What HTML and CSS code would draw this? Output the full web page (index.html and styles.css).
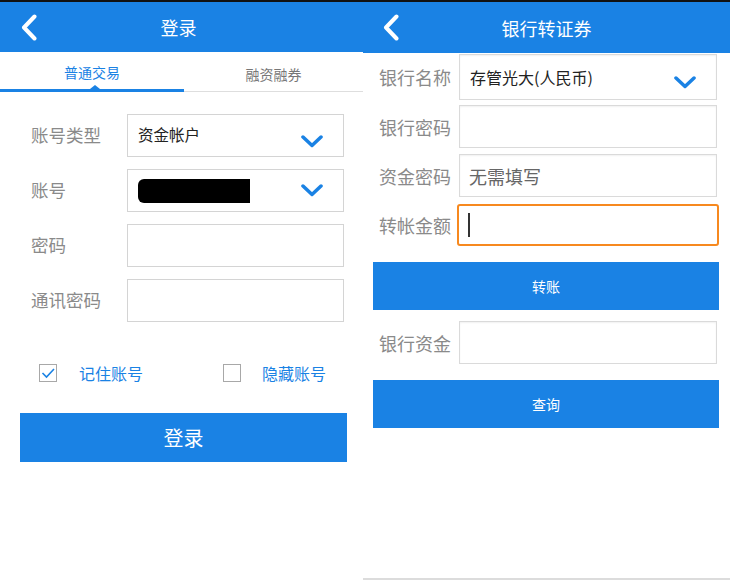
FILE: index.html
```html
<!DOCTYPE html>
<html lang="zh-CN">
<head>
<meta charset="utf-8">
<title>登录 / 银行转证券</title>
<link rel="stylesheet" href="styles.css">
</head>
<body>
<div class="page">
  <section class="panel panel-left">
    <header class="header header-left">
      <svg class="back" width="16" height="27" viewBox="0 0 16 27"><path d="M13.5 2.5 L3 13.5 L13.5 24.5" fill="none" stroke="#fff" stroke-width="4" stroke-linecap="round" stroke-linejoin="round"/></svg>
      <span class="title title-left">登录</span>
    </header>
    <nav class="tabs">
      <div class="tab tab-active">普通交易<span class="tri"></span></div>
      <div class="tab">融资融券</div>
    </nav>
    <div class="form-left">
      <div class="lrow">
        <span class="llabel">账号类型</span>
        <div class="lbox lbox-select lbox-bottom"><span class="lvalue">资金帐户</span>
          <svg class="chev" width="22" height="13" viewBox="0 0 22 13"><path d="M2 2 L11 10.5 L20 2" fill="none" stroke="#1a82e4" stroke-width="3.5" stroke-linecap="round" stroke-linejoin="round"/></svg>
        </div>
      </div>
      <div class="lrow">
        <span class="llabel">账号</span>
        <div class="lbox lbox-select"><span class="redact"></span>
          <svg class="chev" width="22" height="13" viewBox="0 0 22 13"><path d="M2 2 L11 10.5 L20 2" fill="none" stroke="#1a82e4" stroke-width="3.5" stroke-linecap="round" stroke-linejoin="round"/></svg>
        </div>
      </div>
      <div class="lrow">
        <span class="llabel">密码</span>
        <div class="lbox"></div>
      </div>
      <div class="lrow">
        <span class="llabel">通讯密码</span>
        <div class="lbox"></div>
      </div>
    </div>
    <div class="checks">
      <div class="check check-first">
        <span class="cbox"><svg width="16" height="16" viewBox="0 0 16 16"><path d="M2.5 8 L6.5 12 L14 4" fill="none" stroke="#1a82e4" stroke-width="1.6"/></svg></span>
        <span class="ctext">记住账号</span>
      </div>
      <div class="check check-second">
        <span class="cbox"></span>
        <span class="ctext">隐藏账号</span>
      </div>
    </div>
    <div class="btn btn-login">登录</div>
  </section>

  <section class="panel panel-right">
    <header class="header header-right">
      <svg class="back" width="16" height="27" viewBox="0 0 16 27"><path d="M13.5 2.5 L3 13.5 L13.5 24.5" fill="none" stroke="#fff" stroke-width="4" stroke-linecap="round" stroke-linejoin="round"/></svg>
      <span class="title">银行转证券</span>
    </header>
    <div class="rrow r1">
      <span class="rlabel">银行名称</span>
      <div class="rbox rbox-select"><span class="rvalue">存管光大(人民币)</span>
        <svg class="chev" width="22" height="13" viewBox="0 0 22 13"><path d="M2 2 L11 10.5 L20 2" fill="none" stroke="#1a82e4" stroke-width="3.5" stroke-linecap="round" stroke-linejoin="round"/></svg>
      </div>
    </div>
    <div class="rrow r2">
      <span class="rlabel">银行密码</span>
      <div class="rbox"></div>
    </div>
    <div class="rrow r3">
      <span class="rlabel">资金密码</span>
      <div class="rbox"><span class="placeholder">无需填写</span></div>
    </div>
    <div class="rrow r4">
      <span class="rlabel">转帐金额</span>
      <div class="rbox rbox-focus"><span class="cursor"></span></div>
    </div>
    <div class="btn btn-r btn-transfer">转账</div>
    <div class="rrow r5">
      <span class="rlabel">银行资金</span>
      <div class="rbox"></div>
    </div>
    <div class="btn btn-r btn-query">查询</div>
  </section>
</div>
</body>
</html>
```

FILE: styles.css
```css
html, body {
  margin: 0;
  padding: 0;
  background: #fff;
}
body {
  font-family: "Noto Sans CJK SC", "Noto Sans", sans-serif;
  width: 730px;
  height: 580px;
  overflow: hidden;
}
.page {
  display: flex;
  width: 730px;
  height: 580px;
}
.panel {
  display: flex;
  flex-direction: column;
  height: 580px;
  box-sizing: border-box;
}
.panel-left {
  width: 363px;
}
.panel-right {
  width: 367px;
  border-bottom: 2px solid #dcdcdc;
}
.header {
  background: #1a82e4;
  border-top: 2px solid #111;
  display: flex;
  align-items: center;
  justify-content: center;
  position: relative;
  color: #fff;
}
.header-left { height: 50px; }
.header-right { height: 51px; }
.title {
  font-size: 18px;
  line-height: 1;
}
.title-left {
  margin-left: -6px;
}
.back {
  position: absolute;
  top: 12px;
}
.header-left .back { left: 21px; }
.header-right .back { left: 20px; }

/* tabs */
.tabs {
  display: flex;
  height: 40px;
}
.tab {
  flex: 1;
  display: flex;
  align-items: center;
  justify-content: center;
  font-size: 14px;
  color: #777;
  border-bottom: 1px solid #dedede;
  padding-top: 4px;
  box-sizing: border-box;
  position: relative;
}
.tab-active {
  flex: 0 0 184px;
  color: #1a82e4;
  border-bottom: 3px solid #1a82e4;
  padding-top: 2px;
}
.tri {
  position: absolute;
  left: 90px;
  bottom: 0;
  width: 0;
  height: 0;
  border-left: 5px solid transparent;
  border-right: 5px solid transparent;
  border-bottom: 4px solid #1a82e4;
}

/* left form */
.form-left {
  display: flex;
  flex-direction: column;
  gap: 12px;
  padding: 22px 0 0 31px;
}
.lrow {
  display: flex;
  align-items: center;
}
.llabel {
  width: 96px;
  font-size: 17.5px;
  color: #8a8a8a;
  line-height: 1;
  margin-top: -2px;
}
.lbox {
  width: 217px;
  height: 43px;
  border: 1px solid #d4d4d4;
  box-sizing: border-box;
  display: flex;
  align-items: center;
  position: relative;
}
.lbox-select {
  justify-content: space-between;
  padding: 0 20px 0 10px;
}
.lbox-bottom .chev {
  align-self: flex-end;
  margin-bottom: 8px;
}
.lvalue {
  font-size: 15.5px;
  color: #222;
  margin-top: -3px;
}
.redact {
  width: 112px;
  height: 24px;
  background: #000;
  border-radius: 6px 0 0 6px;
}

/* checkboxes */
.checks {
  display: flex;
  padding: 42px 0 0 39px;
}
.check {
  display: flex;
  align-items: center;
}
.check-first { width: 184px; }
.cbox {
  width: 18px;
  height: 18px;
  border: 1.5px solid #a8a8a8;
  box-sizing: border-box;
  display: flex;
  align-items: center;
  justify-content: center;
}
.ctext {
  margin-left: 22px;
  font-size: 16px;
  color: #1a82e4;
  line-height: 1;
}
.check-second .ctext { margin-left: 21px; }

/* buttons */
.btn {
  background: #1a82e4;
  color: #fff;
  display: flex;
  align-items: center;
  justify-content: center;
}
.btn-login {
  margin: 31px 0 0 20px;
  width: 327px;
  height: 49px;
  font-size: 20px;
}
.btn-r {
  margin-left: 10px;
  width: 346px;
  height: 48px;
  font-size: 14px;
}
.btn-transfer { margin-top: 16px; }
.btn-query { margin-top: 16px; }

/* right form */
.rrow {
  display: flex;
  align-items: center;
  padding-left: 16px;
}
.r1 { margin-top: 1px; }
.r2 { margin-top: 5px; }
.r3 { margin-top: 6px; }
.r4 { margin-top: 7px; }
.r5 { margin-top: 11px; }
.rlabel {
  width: 80px;
  font-size: 18px;
  color: #8a8a8a;
  line-height: 1;
}
.rbox {
  width: 258px;
  height: 43px;
  border: 1px solid #dadada;
  box-shadow: inset 0 1px 2px rgba(0, 0, 0, 0.06);
  box-sizing: border-box;
  display: flex;
  align-items: center;
  padding-left: 9px;
}
.r1 .rbox { height: 46px; }
.r4 .rbox { height: 42px; }
.rbox-select {
  justify-content: space-between;
  padding: 0 20px 0 10px;
}
.rbox-select .chev {
  align-self: flex-end;
  margin-bottom: 10px;
}
.rvalue {
  font-size: 16px;
  color: #222;
  margin-top: -1px;
}
.placeholder {
  font-size: 18px;
  color: #666;
  line-height: 1;
}
.rbox-focus {
  border: 2px solid #f7891f;
  border-radius: 3px;
  width: 262px;
  margin-left: -2px;
  padding-left: 9px;
  box-shadow: none;
}
.cursor {
  width: 1.5px;
  height: 24px;
  background: #333;
}
```
